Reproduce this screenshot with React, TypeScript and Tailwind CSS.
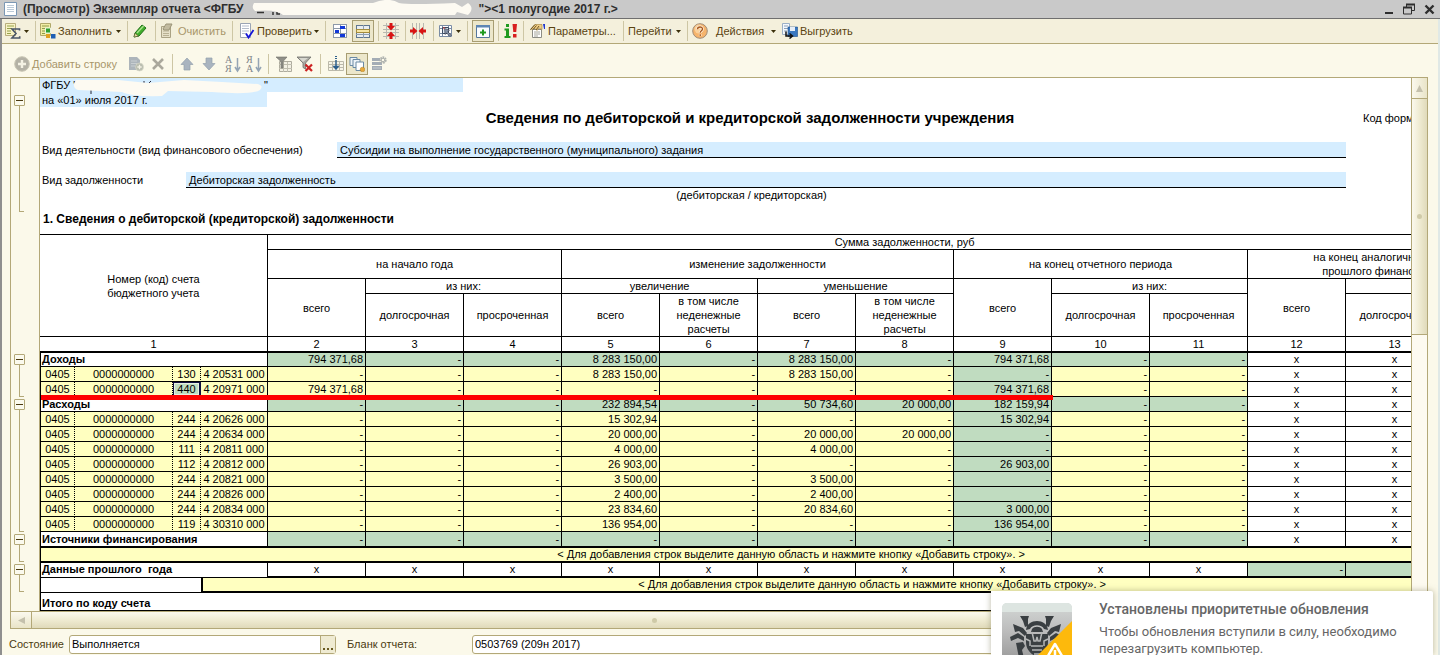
import React from "react";

/* ---------- icons ---------- */

type KidsProps = { children: React.ReactNode };

const Ico = ({ children }: KidsProps) => (
  <svg width="16" height="16" viewBox="0 0 16 16" className="shrink-0" aria-hidden="true">
    {children}
  </svg>
);

const Caret = () => (
  <svg width="5" height="3" viewBox="0 0 5 3" className="shrink-0" aria-hidden="true">
    <path d="M0 0h5L2.5 3z" fill="#3a2f0a" />
  </svg>
);

const SigmaIcon = () => (
  <Ico>
    <path d="M.5 .5h10v12H.5z" fill="#f7f3c6" stroke="#b9ae7c" />
    <path d="M2 3h7M2 5.5h5M2 8h4M2 10.5h4" stroke="#96a04a" />
    <path d="M14.500 7.5V6H7l4 4.5L7 15h7.700v-1.8" fill="none" stroke="#4a5568" strokeWidth="1.6" />
  </Ico>
);
const FillIcon = () => (
  <Ico>
    <path d="M.5 .5h10v12H.5z" fill="#f1eda6" stroke="#b0a86a" />
    <path d="M2 3h7M2 5.5h4M2 8h4M2 10.5h3" stroke="#8f9a4a" />
    <path d="M5.500 5h5v5h-5z" fill="#2ea02e" stroke="#e8f4e0" />
    <path d="M6 11h4v4H6z" fill="#e0a020" />
    <path d="M11 11h4.500v4.500H11z" fill="#1e5fb4" />
  </Ico>
);
const PencilIcon = () => (
  <Ico>
    <path d="M2 14l1-4 7-8 4 3-7 8z" fill="#3fae2a" stroke="#1f6f18" strokeLinejoin="round" />
    <path d="M5 10l6.5-7" stroke="#a9e08c" strokeWidth="1.4" />
    <path d="M2 14l1-3.8L6.4 13z" fill="#e8d9a0" stroke="#5d5a30" strokeWidth=".6" />
  </Ico>
);
const ClearIcon = () => (
  <Ico>
    <path d="M1.5 3.5h9v11h-9z" fill="#e6e0c8" stroke="#aaa284" />
    <path d="M3 8h6M3 10.5h6M3 12.5h6" stroke="#b8b093" />
    <path d="M3 6l3-5h6l-3 6H4z" fill="#c2bba0" stroke="#9b9478" />
  </Ico>
);
const CheckIcon = () => (
  <Ico>
    <path d="M1.5 .5h10v14h-10z" fill="#fff" stroke="#9aa4b4" />
    <path d="M3 3h7M3 5.5h7M3 8h7M3 10.5h4" stroke="#b3bccb" />
    <path d="M7 10.5l2.5 4L14.5 7" fill="none" stroke="#1414d8" strokeWidth="1.8" />
  </Ico>
);
const CellsIcon = () => (
  <Ico>
    <g shapeRendering="crispEdges">
      <path d="M1 1h14v14H1z" fill="#fff" />
      <path d="M1.500 1.500h13v13h-13zM1 5.500h14M1 10.500h14M8.500 1v14" fill="none" stroke="#8d99a8" />
      <path d="M8 3h5v3H8zM3 7h4v3H3zM8 11h5v3H8z" fill="#1238d8" />
    </g>
  </Ico>
);
const RowSelIcon = () => (
  <Ico>
    <g shapeRendering="crispEdges">
      <path d="M1.500 2.500h13v12h-13z" fill="#e9edf0" stroke="#5f7690" />
      <path d="M8.500 2v13M1 11.500h14" stroke="#8fa0b2" />
      <path d="M1.500 6.500h13v3h-13z" fill="#f6e6a4" stroke="#a48c3c" />
    </g>
  </Ico>
);
const RowsMergeIcon = () => (
  <Ico>
    <path d="M0 2.500h16M0 6.500h16M0 9.500h16M0 13.500h16M3.500 0v16M12.500 0v16" stroke="#b9b9b0" />
    <path d="M6.500 0h3v3H12L8 7.500 4 3h2.500zM6.500 16h3v-3H12L8 8.500 4 13h2.500z" fill="#d81414" />
  </Ico>
);
const ColsMergeIcon = () => (
  <Ico>
    <path d="M2.500 0v16M6.500 0v16M9.500 0v16M13.500 0v16" stroke="#b9b9b0" />
    <path d="M0 6.500v3h3V12l4.500-4L3 4v2.500zM16 6.500v3h-3V12L8.500 8 13 4v2.500z" fill="#d81414" />
  </Ico>
);
const GridCursorIcon = () => (
  <Ico>
    <path d="M1 2h13v12H1z" fill="#fff" />
    <path d="M1.500 2.500h12v11h-12zM1 5.500h13M1 10.500h13M4.500 2v12M10.500 2v12" fill="none" stroke="#7a8ca4" />
    <path d="M4.500 4.500h6v6h-6z" fill="#dfe8f2" stroke="#3a4a60" />
    <path d="M6.500 5.500l.5 6 1.600-1.400L12 13.500l1.300-1.300-3.400-3.400L11.500 7z" fill="#8492a6" stroke="#223" strokeWidth=".5" />
    <path d="M5 5h2" stroke="#d04040" />
  </Ico>
);
const PlusBoxIcon = () => (
  <Ico>
    <path d="M1.500 2.500h13v12h-13z" fill="#fbfdff" stroke="#55779c" />
    <path d="M1 2h14v2.500H1z" fill="#5d86b4" />
    <path d="M8 6.500v6M5 9.500h6" stroke="#1f9a1f" strokeWidth="2" />
  </Ico>
);
const InfoBangIcon = () => (
  <Ico>
    <path d="M3 1h3v3H3zM1.500 5.500H6V13h1.500v2h-6v-2H3V7.500H1.500z" fill="#1f9a1f" />
    <path d="M9.500 1H14l-.8 8h-2.900zM10 11h3.500v3.500H10z" fill="#d81f1f" />
  </Ico>
);
const ParamsIcon = () => (
  <Ico>
    <path d="M2.500 6.500h9v8h-9z" fill="#fff" stroke="#8c8c84" />
    <path d="M4 9h6M4 11h6M4 13h4" stroke="#a4a49a" />
    <path d="M.5 6.500L5 1.500h7v5L9 5 7 7.500 5 5.500z" fill="#f0cd84" stroke="#a0803a" strokeWidth=".6" />
    <path d="M.5 6.500L5 1.500M3 6.500l3.500-4M6 7l3-4" stroke="#5f4a1a" strokeWidth=".9" />
    <path d="M13 1h2v5h-1z" fill="#2038d0" />
  </Ico>
);
const HelpIcon = () => (
  <Ico>
    <circle cx="8" cy="8" r="7.300" fill="#f6b46c" stroke="#a08c78" />
    <circle cx="7" cy="6" r="4.500" fill="#fbd8a8" opacity=".8" />
    <path d="M5.500 6.300C5.500 3.200 10.600 3.300 10.500 6c0 1.700-2.300 1.800-2.300 3.800M8.200 11.300v1.700" fill="none" stroke="#fff8ee" strokeWidth="2.600" />
    <path d="M5.500 6.300C5.500 3.200 10.600 3.300 10.500 6c0 1.700-2.300 1.800-2.300 3.800M8.200 11.300v1.700" fill="none" stroke="#a8581c" strokeWidth="1.400" />
  </Ico>
);
const ExportIcon = () => (
  <Ico>
    <path d="M.500 .500h7v11h-7z" fill="#f4f8fc" stroke="#9cb0c6" />
    <path d="M2 3h4M2 5.500h4M2 8h3" stroke="#8ba2bb" />
    <path d="M6 4h9.500v9.500H6z" fill="#3a78c0" stroke="#1d4f8c" strokeWidth=".6" />
    <path d="M8 4h5v4H8z" fill="#e6eef8" />
    <path d="M4 8.500v4.500h6M7.500 10.500L10.500 13l-3 2.500" fill="none" stroke="#111" strokeWidth="1.500" />
  </Ico>
);
const AddIcon = () => (
  <Ico>
    <circle cx="8" cy="8" r="7.300" fill="#b4b2a6" stroke="#c9c6b4" />
    <path d="M8 4v8M4 8h8" stroke="#f4f2e4" strokeWidth="2.400" />
  </Ico>
);
const AddCopyIcon = () => (
  <Ico>
    <path d="M1 1h8l3 3v10H1z" fill="#adb5bb" />
    <path d="M3 5h6M3 7.500h6M3 10h4" stroke="#c9cfd2" />
    <circle cx="11.500" cy="11" r="4" fill="#b9bdaf" stroke="#d8d8c8" strokeWidth=".7" />
    <path d="M11.500 8.800v4.400M9.300 11h4.400" stroke="#f4f2e4" strokeWidth="1.300" />
  </Ico>
);
const CrossIcon = () => (
  <Ico>
    <path d="M3 3l10 10M13 3L3 13" stroke="#aaa89c" strokeWidth="2.600" />
  </Ico>
);
const UpIcon = () => (
  <Ico>
    <path d="M8 2l6 6.500h-3V14H5V8.500H2z" fill="#a9b4bf" stroke="#93a0ad" strokeWidth=".7" />
  </Ico>
);
const DownIcon = () => (
  <Ico>
    <path d="M8 14l6-6.500h-3V2H5v5.500H2z" fill="#a9b4bf" stroke="#93a0ad" strokeWidth=".7" />
  </Ico>
);
const SortIcon = ({ flip }: { flip?: boolean }) => (
  <svg width="16" height="20" viewBox="0 0 16 20" className="shrink-0" aria-hidden="true">
    <text x="0" y="9" fontSize="10" fontFamily="Liberation Serif, serif" fill="#7f858b">
      {flip ? "Я" : "А"}
    </text>
    <text x="0" y="18" fontSize="10" fontFamily="Liberation Serif, serif" fill="#7f858b">
      {flip ? "А" : "Я"}
    </text>
    <path d="M12.500 4v12M10 13l2.500 4 2.500-4" fill="none" stroke="#94a4b4" strokeWidth="1.500" />
  </svg>
);
const FilterIcon = () => (
  <Ico>
    <path d="M3.500 5.500h12v10h-12z" fill="#f3f1e4" stroke="#aeac9e" />
    <path d="M3 8.500h13M3 12.500h13M7.500 6v10M11.500 6v10" stroke="#c1bfb0" />
    <path d="M0 1h11L7 5.500V12H5V5.500z" fill="#8f8f88" stroke="#6f6f6a" strokeWidth=".6" />
  </Ico>
);
const FilterOffIcon = () => (
  <Ico>
    <path d="M0 1h14L8.500 7v6l-2.500-1.500V7z" fill="#a9a9a2" stroke="#6f6f6a" strokeWidth=".8" />
    <path d="M2 2h9L6 6z" fill="#d8d8d0" />
    <path d="M8.500 8.500l6.500 6.500M15 8.500L8.500 15" stroke="#cc2222" strokeWidth="2.200" />
  </Ico>
);
const ColDownIcon = () => (
  <Ico>
    <path d="M.5 5.500h15v9H.5zM0 8.500h16M0 11.500h16M4.500 5v10M11.500 5v10" fill="#f7f5e8" stroke="#bbb9aa" />
    <path d="M8 0v3" stroke="#2c5f8c" strokeWidth="2" strokeDasharray="1 1" />
    <path d="M8 4v8M6 10.500L8 13l2-2.500z" fill="#2c5f8c" stroke="#2c5f8c" strokeWidth="1.500" />
  </Ico>
);
const LayersIcon = () => (
  <Ico>
    <path d="M1 1.500h7v8H1z" fill="#eef4f8" stroke="#6b8aa4" />
    <path d="M4 3.500h7v8H4z" fill="#eef4f8" stroke="#6b8aa4" />
    <path d="M7 6h7.500v8.500H7z" fill="#fff" stroke="#6b8aa4" />
    <circle cx="13.500" cy="13.500" r="2.300" fill="#e8a93a" stroke="#b07a1c" strokeWidth=".5" />
  </Ico>
);
const ListGearIcon = () => (
  <Ico>
    <path d="M1 2h8v3H1zM1 6h10v3H1zM1 10h10v4H1z" fill="#a4adb5" />
    <path d="M2 12h8" stroke="#c5cbd0" />
    <circle cx="12" cy="4" r="2.600" fill="none" stroke="#aeb2ae" strokeWidth="2.200" strokeDasharray="1.600 .7" />
    <circle cx="12" cy="4" r="1.800" fill="none" stroke="#aeb2ae" />
  </Ico>
);

/* ---------- toolbar parts ---------- */

type TbProps = {
  label: string;
  icon?: React.ReactNode;
  text?: string;
  caret?: boolean;
  disabled?: boolean;
  className: string;
};

const Tb = ({ label, icon, text, caret, disabled, className }: TbProps) => (
  <button
    type="button"
    aria-label={label}
    disabled={disabled}
    className={`flex h-[22px] shrink-0 items-center gap-[2px] whitespace-nowrap text-[11px] leading-[14px] ${
      disabled ? "text-[#a8966a]" : "text-[#5a4310]"
    } ${className}`}
  >
    {icon}
    {text && <span>{text}</span>}
    {caret && (
      <span className="ml-auto pr-[2px]">
        <Caret />
      </span>
    )}
  </button>
);

const pressed = "w-[22px] justify-center border border-[#a79d72] bg-[#ece7cb]";

const Sep = () => <span className="mx-1 h-5 w-px shrink-0 bg-[#cdc6a4]" />;

/* ---------- report data ---------- */

type Row = { label?: string; code?: [string, string]; active?: boolean; v: string[] };

const item = (k: string, g: string, c5: string, c7: string, c8: string, c9: string, c2 = "-", active = false): Row => ({
  code: [k, g],
  active,
  v: [c2, "-", "-", c5, "-", c7, c8, c9, "-", "-"],
});

const rows: Row[] = [
  { label: "Доходы", v: ["794 371,68", "-", "-", "8 283 150,00", "-", "8 283 150,00", "-", "794 371,68", "-", "-"] },
  item("130", "4 20531 000", "8 283 150,00", "8 283 150,00", "-", "-"),
  item("440", "4 20971 000", "-", "-", "-", "794 371,68", "794 371,68", true),
  { label: "Расходы", v: ["-", "-", "-", "232 894,54", "-", "50 734,60", "20 000,00", "182 159,94", "-", "-"] },
  item("244", "4 20626 000", "15 302,94", "-", "-", "15 302,94"),
  item("244", "4 20634 000", "20 000,00", "20 000,00", "20 000,00", "-"),
  item("111", "4 20811 000", "4 000,00", "4 000,00", "-", "-"),
  item("112", "4 20812 000", "26 903,00", "-", "-", "26 903,00"),
  item("244", "4 20821 000", "3 500,00", "3 500,00", "-", "-"),
  item("244", "4 20826 000", "2 400,00", "2 400,00", "-", "-"),
  item("244", "4 20834 000", "23 834,60", "20 834,60", "-", "3 000,00"),
  item("119", "4 30310 000", "136 954,00", "-", "-", "136 954,00"),
];

const H = "border-b border-r border-black p-0 text-center font-normal leading-[14px] ";
const D = "border-b border-r border-black p-0 ";
const GREEN = "bg-[#c0dcc0] ";
const YELLOW = "bg-[#ffffc0] ";
const DOTTED = "text-center [border-right-style:dotted] ";

const DataRow = ({ row, first }: { row: Row; first: boolean }) => (
  <tr className={first ? "h-[14px] align-top" : "h-[15px]"}>
    {row.code ? (
      <>
        <td className={D + YELLOW + DOTTED + "border-l"}>0405</td>
        <td className={D + YELLOW + DOTTED}>0000000000</td>
        {row.active ? (
          <td className={GREEN + "border-b border-r border-[#101040] p-0 text-center shadow-[inset_0_0_0_1px_#101040,inset_0_0_0_2px_#e6efe0]"}>
            {row.code[0]}
          </td>
        ) : (
          <td className={D + YELLOW + DOTTED}>{row.code[0]}</td>
        )}
        <td className={D + YELLOW + "text-center"}>{row.code[1]}</td>
      </>
    ) : (
      <th colSpan={4} scope="row" className={D + "border-l bg-white pl-px text-left font-bold"}>
        {row.label}
      </th>
    )}
    {row.v.map((v, i) => (
      <td key={i} className={D + "pr-[2px] text-right " + (row.label || i === 7 ? GREEN : YELLOW)}>
        {v}
      </td>
    ))}
    {[12, 13, 14].map((n) => (
      <td key={n} className={D + "bg-white text-center"}>
        x
      </td>
    ))}
  </tr>
);

const HINT = "< Для добавления строк выделите данную область и нажмите кнопку «Добавить строку». >";

const ReportTable = () => (
  <table className="w-[1502px] table-fixed border-separate border-spacing-0 whitespace-nowrap border-t border-black leading-[12px]">
    <colgroup>
      <col className="w-[35px]" />
      <col className="w-[98px]" />
      <col className="w-[28px]" />
      <col className="w-[67px]" />
      {Array.from({ length: 13 }, (_, i) => (
        <col key={i} className="w-[98px]" />
      ))}
    </colgroup>
    <thead>
      <tr className="h-[15px]">
        <th colSpan={4} rowSpan={4} className={H}>
          <span className="inline-block text-left">
            Номер (код) счета
            <br />
            бюджетного учета
          </span>
        </th>
        <th colSpan={13} className={H}>Сумма задолженности, руб</th>
      </tr>
      <tr className="h-[29px]">
        <th colSpan={3} className={H}>на начало года</th>
        <th colSpan={4} className={H}>изменение задолженности</th>
        <th colSpan={3} className={H}>на конец отчетного периода</th>
        <th colSpan={3} className={H}>
          на конец аналогичного периода
          <br />
          прошлого финансового года
        </th>
      </tr>
      <tr className="h-[15px]">
        <th rowSpan={2} className={H}>всего</th>
        <th colSpan={2} className={H}>из них:</th>
        <th colSpan={2} className={H}>увеличение</th>
        <th colSpan={2} className={H}>уменьшение</th>
        <th rowSpan={2} className={H}>всего</th>
        <th colSpan={2} className={H}>из них:</th>
        <th rowSpan={2} className={H}>всего</th>
        <th colSpan={2} className={H}>из них:</th>
      </tr>
      <tr className="h-[43px]">
        <th className={H}>долгосрочная</th>
        <th className={H}>просроченная</th>
        {["a", "b"].map((k) => (
          <React.Fragment key={k}>
            <th className={H}>всего</th>
            <th className={H}>
              в том числе
              <br />
              неденежные
              <br />
              расчеты
            </th>
          </React.Fragment>
        ))}
        <th className={H}>долгосрочная</th>
        <th className={H}>просроченная</th>
        <th className={H}>долгосрочная</th>
        <th className={H}>просроченная</th>
      </tr>
      <tr className="h-[16px]">
        <th colSpan={4} className={H + "border-b-2"}>1</th>
        {Array.from({ length: 13 }, (_, i) => (
          <th key={i} className={H + "border-b-2"}>{i + 2}</th>
        ))}
      </tr>
    </thead>
    <tbody>
      {rows.map((r, i) => (
        <DataRow key={i} row={r} first={i === 0} />
      ))}
      <tr className="h-[16px]">
        <th colSpan={4} scope="row" className={D + "border-b-2 border-l bg-white pl-px text-left font-bold"}>Источники финансирования</th>
        {Array.from({ length: 10 }, (_, i) => (
          <td key={i} className={D + GREEN + "border-b-2 pr-[2px] text-right"}>-</td>
        ))}
        {[12, 13, 14].map((n) => (
          <td key={n} className={D + "border-b-2 bg-white text-center"}>x</td>
        ))}
      </tr>
      <tr className="h-[15px] align-top">
        <td colSpan={17} className={D + YELLOW + "border-b-2 border-l text-center"}>{HINT}</td>
      </tr>
      <tr className="h-[15px] align-top">
        <th colSpan={4} scope="row" className={D + "whitespace-pre border-l bg-white pl-px text-left font-bold"}>{"Данные прошлого  года"}</th>
        {Array.from({ length: 10 }, (_, i) => (
          <td key={i} className={D + "border-b-2 bg-white text-center"}>x</td>
        ))}
        {[12, 13, 14].map((n) => (
          <td key={n} className={D + GREEN + "border-b-2 pr-[2px] text-right"}>-</td>
        ))}
      </tr>
      <tr className="h-[15px] align-top">
        <td colSpan={3} className="border-b border-l border-black bg-white p-0" />
        <td colSpan={14} className={D + YELLOW + "border-b-2 border-l-2 text-center"}>{HINT}</td>
      </tr>
      <tr className="h-[18px]">
        <th colSpan={17} scope="row" className={D + "border-l bg-white pl-px pt-[2px] text-left font-bold"}>Итого по коду счета</th>
      </tr>
      <tr className="h-[15px]">
        <td colSpan={3} className={D + "border-l"} />
        <td className={D} />
        {Array.from({ length: 13 }, (_, i) => (
          <td key={i} className={D} />
        ))}
      </tr>
    </tbody>
  </table>
);

/* ---------- outline gutter ---------- */

const Group = ({ className }: { className: string }) => (
  <div className={"flex shrink-0 flex-col pl-[3px] " + className}>
    <button
      type="button"
      aria-label="Свернуть группу"
      className="flex h-[11px] w-[11px] shrink-0 items-center justify-center rounded-[1px] border border-[#b3a878] bg-[#fbfaee]"
    >
      <span className="h-px w-[7px] bg-[#4a3a10]" />
    </button>
    <div className="ml-[5px] w-[5px] flex-1 border-b border-l border-[#b3a878]" />
  </div>
);

/* ---------- popup logo ---------- */

const SpiderLogo = () => (
  <svg width="70" height="70" viewBox="0 0 70 70" className="shrink-0" aria-hidden="true">
    <defs>
      <linearGradient id="tile" x1="0" y1="0" x2="0" y2="1">
        <stop offset="0" stopColor="#d4d8d6" />
        <stop offset=".4" stopColor="#bcbcbc" />
        <stop offset="1" stopColor="#8c8c8c" />
      </linearGradient>
      <clipPath id="tileClip">
        <rect width="70" height="70" rx="5" />
      </clipPath>
    </defs>
    <g clipPath="url(#tileClip)">
      <rect width="70" height="70" fill="url(#tile)" />
      <rect width="70" height="9" fill="#dde5e1" />
      <g fill="#3a3f42">
        <path d="M18 13h9l-1 3v7l-3 1-2-6zM52 13h-9l1 3v7l3 1 2-6z" />
        <path d="M11 21l10 4 4 5-2 3-6-5-4 1zM59 21l-10 4-4 5 2 3 6-5 4 1z" />
        <path d="M8 34l8-4 6 4v4l-6-3-7 3zM62 34l-8-4-6 4v4l6-3 7 3z" />
        <path d="M14 40l7-1 2 4-3 4 2 8h-5zM56 40l-7-1-2 4 3 4-2 8h5z" />
        <path d="M24 27c1-12 21-12 22 0l-4-1c-2-5-12-5-14 0z" />
        <path d="M30 26c2-3 8-3 10 0l1 3H29z" />
        <path d="M24 31h22v8c0 8-5 12-11 15-6-3-11-7-11-15z" />
      </g>
      <path d="M30 29l2 9h2l1-4 1 4h2l2-9M24 36l4 2v5M46 36l-4 2v5M29 43h12M30 47h10M32 51h6" fill="none" stroke="#b4b6b6" strokeWidth="1.500" />
      <path d="M70 18v52H18z" fill="#fdb90c" />
      <path d="M53 41l13 22H40z" fill="none" stroke="#fff" strokeWidth="2.500" strokeLinejoin="round" />
      <path d="M53 47v8" stroke="#fff" strokeWidth="2.500" />
    </g>
  </svg>
);

/* ---------- page ---------- */

export default function App() {
  return (
    <div className="relative flex h-screen flex-col overflow-hidden bg-[#fbf9ea] font-['Liberation_Sans',Arial,sans-serif] text-[11px] text-black">
      <header className="flex h-[19px] shrink-0 items-center border-b border-[#6f6f6f] bg-[#c9c9c9] pl-1 pr-[5px] text-[12px] font-bold leading-[14px] text-[#2e2e2e]">
        <svg width="14" height="14" viewBox="0 0 14 14" className="mr-[5px] shrink-0" aria-hidden="true">
          <path d="M.5.5h12v13H.5z" fill="#fff" stroke="#7b97b4" />
          <path d="M3 3.500h7M3 5.500h7M3 7.500h7M3 9.500h7" stroke="#bccbd9" />
        </svg>
        <h1 className="flex items-center whitespace-pre">
          <span>{"(Просмотр) Экземпляр отчета <ФГБУ"}</span>
          <svg width="235" height="18" viewBox="0 0 235 18" className="shrink-0" aria-hidden="true">
            <path d="M14 12.500h7M30 12v3M34 12v2h3" stroke="#333" strokeWidth="1.500" fill="none" />
            <path d="M11 3Q8 8 12 11Q34 9 40 15L212 15L214 12L225 15Q232 8 225 3L219 7L212 3Q166 5 156 3Q148-2 136 1L130 3Z" fill="#fdfaf2" />
          </svg>
          <span>{'"><1 полугодие 2017 г.>'}</span>
        </h1>
        <div className="ml-auto flex items-center gap-[9px]">
          <button type="button" aria-label="Свернуть">
            <svg width="10" height="12" viewBox="0 0 10 12"><path d="M1 10h8" stroke="#2e2e2e" strokeWidth="2" /></svg>
          </button>
          <button type="button" aria-label="Восстановить">
            <svg width="12" height="12" viewBox="0 0 12 12">
              <path d="M3.500 4V1.500h8v6H8.500M.5 4.500h8v6.500h-8z" fill="none" stroke="#2e2e2e" />
              <path d="M3 1.500h9M0 4.500h9" stroke="#2e2e2e" strokeWidth="2" />
            </svg>
          </button>
          <button type="button" aria-label="Закрыть">
            <svg width="11" height="11" viewBox="0 0 11 11"><path d="M1.500 1.500l8 8M9.500 1.500l-8 8" stroke="#2e2e2e" strokeWidth="2.400" /></svg>
          </button>
        </div>
      </header>

      <div className="flex min-h-0 flex-1 flex-col border-l-2 border-r-2 border-l-[#8f8f8f] border-r-[#e0e9e6]">
        <div role="toolbar" className="flex h-[25px] shrink-0 items-center border-b border-[#b3a878] bg-[#f4f0dc] pl-[3px]">
          <Tb label="Итоги" icon={<SigmaIcon />} caret className="w-[26px]" />
          <Sep />
          <Tb label="Заполнить" icon={<FillIcon />} text="Заполнить" caret className="w-[83px]" />
          <Sep />
          <Tb label="Править" icon={<PencilIcon />} className="w-[19px]" />
          <Sep />
          <Tb label="Очистить" icon={<ClearIcon />} text="Очистить" disabled className="w-[68px]" />
          <Sep />
          <Tb label="Проверить" icon={<CheckIcon />} text="Проверить" caret className="w-[84px] pl-[2px]" />
          <Sep />
          <Tb label="Ячейки" icon={<CellsIcon />} className="w-[22px] pl-[2px]" />
          <Tb label="Строки" icon={<RowSelIcon />} className={pressed} />
          <Sep />
          <Tb label="Сжать строки" icon={<RowsMergeIcon />} className="w-[18px]" />
          <Sep />
          <Tb label="Сжать колонки" icon={<ColsMergeIcon />} className="w-[19px]" />
          <Sep />
          <Tb label="Выделение" icon={<GridCursorIcon />} caret className="w-[25px]" />
          <Sep />
          <Tb label="Панель строк" icon={<PlusBoxIcon />} className={pressed} />
          <Sep />
          <Tb label="Сообщения" icon={<InfoBangIcon />} className="w-[16px]" />
          <Sep />
          <Tb label="Параметры" icon={<ParamsIcon />} text="Параметры..." className="w-[91px] pl-[2px]" />
          <Sep />
          <Tb label="Перейти" text="Перейти" caret className="w-[55px]" />
          <Sep />
          <Tb label="Справка" icon={<HelpIcon />} className="w-[20px]" />
          <Tb label="Действия" text="Действия" caret className="w-[66px] pl-1" />
          <Tb label="Выгрузить" icon={<ExportIcon />} text="Выгрузить" className="pl-1" />
        </div>

        <div role="toolbar" className="flex h-[33px] shrink-0 items-center pl-3 pt-[7px]">
          <Tb label="Добавить строку" icon={<AddIcon />} text="Добавить строку" disabled className="w-[110px]" />
          <Tb label="Копировать строку" icon={<AddCopyIcon />} disabled className="w-[23px] justify-center" />
          <Tb label="Удалить строку" icon={<CrossIcon />} disabled className="w-[21px] justify-center" />
          <Sep />
          <Tb label="Вверх" icon={<UpIcon />} disabled className="w-[20px] justify-center" />
          <Tb label="Вниз" icon={<DownIcon />} disabled className="w-[24px] justify-center" />
          <Tb label="По возрастанию" icon={<SortIcon />} disabled className="w-[23px] justify-center" />
          <Tb label="По убыванию" icon={<SortIcon flip />} disabled className="w-[20px] justify-center" />
          <Sep />
          <Tb label="Отбор" icon={<FilterIcon />} className="w-[21px] justify-center" />
          <Tb label="Снять отбор" icon={<FilterOffIcon />} className="w-[22px] justify-center" />
          <Sep />
          <Tb label="В колонку" icon={<ColDownIcon />} className="w-[21px] justify-center" />
          <Tb label="Слои" icon={<LayersIcon />} className={pressed} />
          <Tb label="Настройка списка" icon={<ListGearIcon />} disabled className="w-[22px] justify-center" />
        </div>

        <main className="ml-2 mr-[10px] flex min-h-0 flex-1 flex-col border border-[#b3a878]">
          <div className="flex min-h-0 flex-1">
            <div className="flex w-[29px] shrink-0 flex-col border-r border-[#b3a878] pt-[17px]">
              <Group className="h-[117px]" />
              <Group className="mt-[142px] h-[43px]" />
              <Group className="mt-[2px] h-[133px]" />
              <Group className="mt-[2px] h-[28px]" />
              <Group className="mt-[2px] h-[28px]" />
            </div>

            <div className="relative min-w-0 flex-1 overflow-hidden bg-white">
              <div className="w-[1502px]">
                <div className="h-[14px] w-[423px] bg-[#d5edff] pl-[2px] leading-[14px]">
                  <span className="inline-block w-[222px]">ФГБУ "</span>"
                </div>
                <div className="h-[15px] w-[227px] bg-[#d5edff] pl-[2px] leading-[16px]">на «01» июля 2017 г.</div>
                <div className="flex h-[22px] items-center">
                  <h2 className="w-[1323px] pl-[97px] pr-0 text-center text-[15px] font-bold leading-[18px]">
                    Сведения по дебиторской и кредиторской задолженности учреждения
                  </h2>
                  <span>Код формы</span>
                </div>
                <div className="mt-[13px] flex h-[16px] w-[1306px] leading-[16px]">
                  <span className="w-[297px] pl-[2px]">Вид деятельности (вид финансового обеспечения)</span>
                  <span className="flex-1 border-b border-black bg-[#d5edff] pl-[3px]">
                    Субсидии на выполнение государственного (муниципального) задания
                  </span>
                </div>
                <div className="mt-[14px] flex h-[16px] w-[1306px] leading-[16px]">
                  <span className="w-[146px] pl-[2px]">Вид задолженности</span>
                  <span className="flex-1 border-b border-black bg-[#d5edff] pl-[3px]">Дебиторская задолженность</span>
                </div>
                <div className="h-4 w-[1306px] pl-[117px] text-center leading-[14px]">(дебиторская / кредиторская)</div>
                <h3 className="h-[30px] pl-[3px] text-[12px] font-bold leading-[31px]">1. Сведения о дебиторской (кредиторской) задолженности</h3>
                <div className="relative">
                  <ReportTable />
                  <div className="absolute left-px top-[161px] h-[5px] w-[1012px] bg-[#fe0000]" />
                </div>
              </div>
              <svg width="192" height="20" viewBox="0 0 192 20" className="absolute left-[32px] top-0" aria-hidden="true">
                <path d="M19 12v4M72 3v4M79 3l-3 3" stroke="#223" fill="none" />
                <path d="M4 2Q-1 9 6 12L50 14Q60 19 90 18L96 13L140 14Q180 17 188 12Q192 8 186 6L150 4L112 2L76 5L46 2Z" fill="#fdfaf2" />
              </svg>
            </div>

            <div className="flex w-[16px] shrink-0 flex-col border-l border-[#b3a878] bg-[#fdfaf0]" aria-hidden="true">
              <div className="flex h-[21px] items-center justify-center border-b border-[#b3a878] bg-gradient-to-r from-[#fbf9ee] to-[#e9e4c8]">
                <svg width="7" height="7" viewBox="0 0 7 7"><path d="M3.500 0L7 7H0z" fill="#c4c0ac" /></svg>
              </div>
              <div className="flex h-[236px] items-center justify-center border-b border-[#b3a878] bg-gradient-to-r from-[#fbf9ee] via-[#efebd2] to-[#e0daba]">
                <span className="h-[5px] w-[5px] rounded-full bg-[#cfcaa8]" />
              </div>
            </div>
          </div>

          <div className="flex h-[17px] shrink-0 border-t border-[#b3a878] bg-[#fdfaf0]" aria-hidden="true">
            <div className="flex w-[21px] items-center justify-center border-r border-[#b3a878] bg-gradient-to-b from-[#fbf9ee] to-[#e9e4c8]">
              <svg width="7" height="7" viewBox="0 0 7 7"><path d="M0 3.500L7 0v7z" fill="#c4c0ac" /></svg>
            </div>
            <div className="flex w-[88%] items-center justify-center border-r border-[#b3a878] bg-gradient-to-b from-[#fbf9ee] via-[#efebd2] to-[#e0daba]">
              <span className="h-[5px] w-[5px] rounded-full bg-[#cfcaa8]" />
            </div>
          </div>
        </main>

        <footer className="flex h-[26px] shrink-0 items-start pl-[7px] pr-[10px] pt-[6px] text-[11px] leading-[19px] text-[#4a3a10]">
          <label htmlFor="state" className="w-[60px] whitespace-nowrap">Состояние</label>
          <div className="flex h-[19px] w-[267px] rounded-[3px] border border-[#b3a878] bg-white">
            <input id="state" defaultValue="Выполняется" className="min-w-0 flex-1 bg-transparent pl-[2px] text-black outline-none" />
            <button type="button" aria-label="Выбрать состояние" className="flex w-[15px] items-end justify-center gap-[2px] border-l border-[#b3a878] bg-[#efebd2] pb-[3px]">
              <i className="h-[2px] w-[2px] bg-[#6a5a20]" />
              <i className="h-[2px] w-[2px] bg-[#6a5a20]" />
              <i className="h-[2px] w-[2px] bg-[#6a5a20]" />
            </button>
          </div>
          <label htmlFor="form" className="w-[136px] whitespace-nowrap pl-[11px]">Бланк отчета:</label>
          <input
            id="form"
            defaultValue="0503769 (209н 2017)"
            className="h-[19px] min-w-0 flex-1 rounded-[3px] border border-[#b3a878] bg-white pl-[2px] text-black outline-none"
          />
        </footer>
      </div>

      <aside className="absolute bottom-0 right-[7px] flex h-16 w-[442px] gap-[27px] overflow-hidden rounded-tr-[2px] bg-white pl-[11px] pt-3 font-[Roboto,'Noto_Sans',sans-serif] text-[#666] shadow-[0_0_6px_rgba(120,115,80,0.5)]">
        <SpiderLogo />
        <div className="-mt-1 text-[13px]">
          <p className="text-[14px] font-medium leading-[20px]">Установлены приоритетные обновления</p>
          <p className="mt-[4px] leading-[17px]">
            Чтобы обновления вступили в силу, необходимо
            <br />
            перезагрузить компьютер.
          </p>
        </div>
      </aside>
    </div>
  );
}
